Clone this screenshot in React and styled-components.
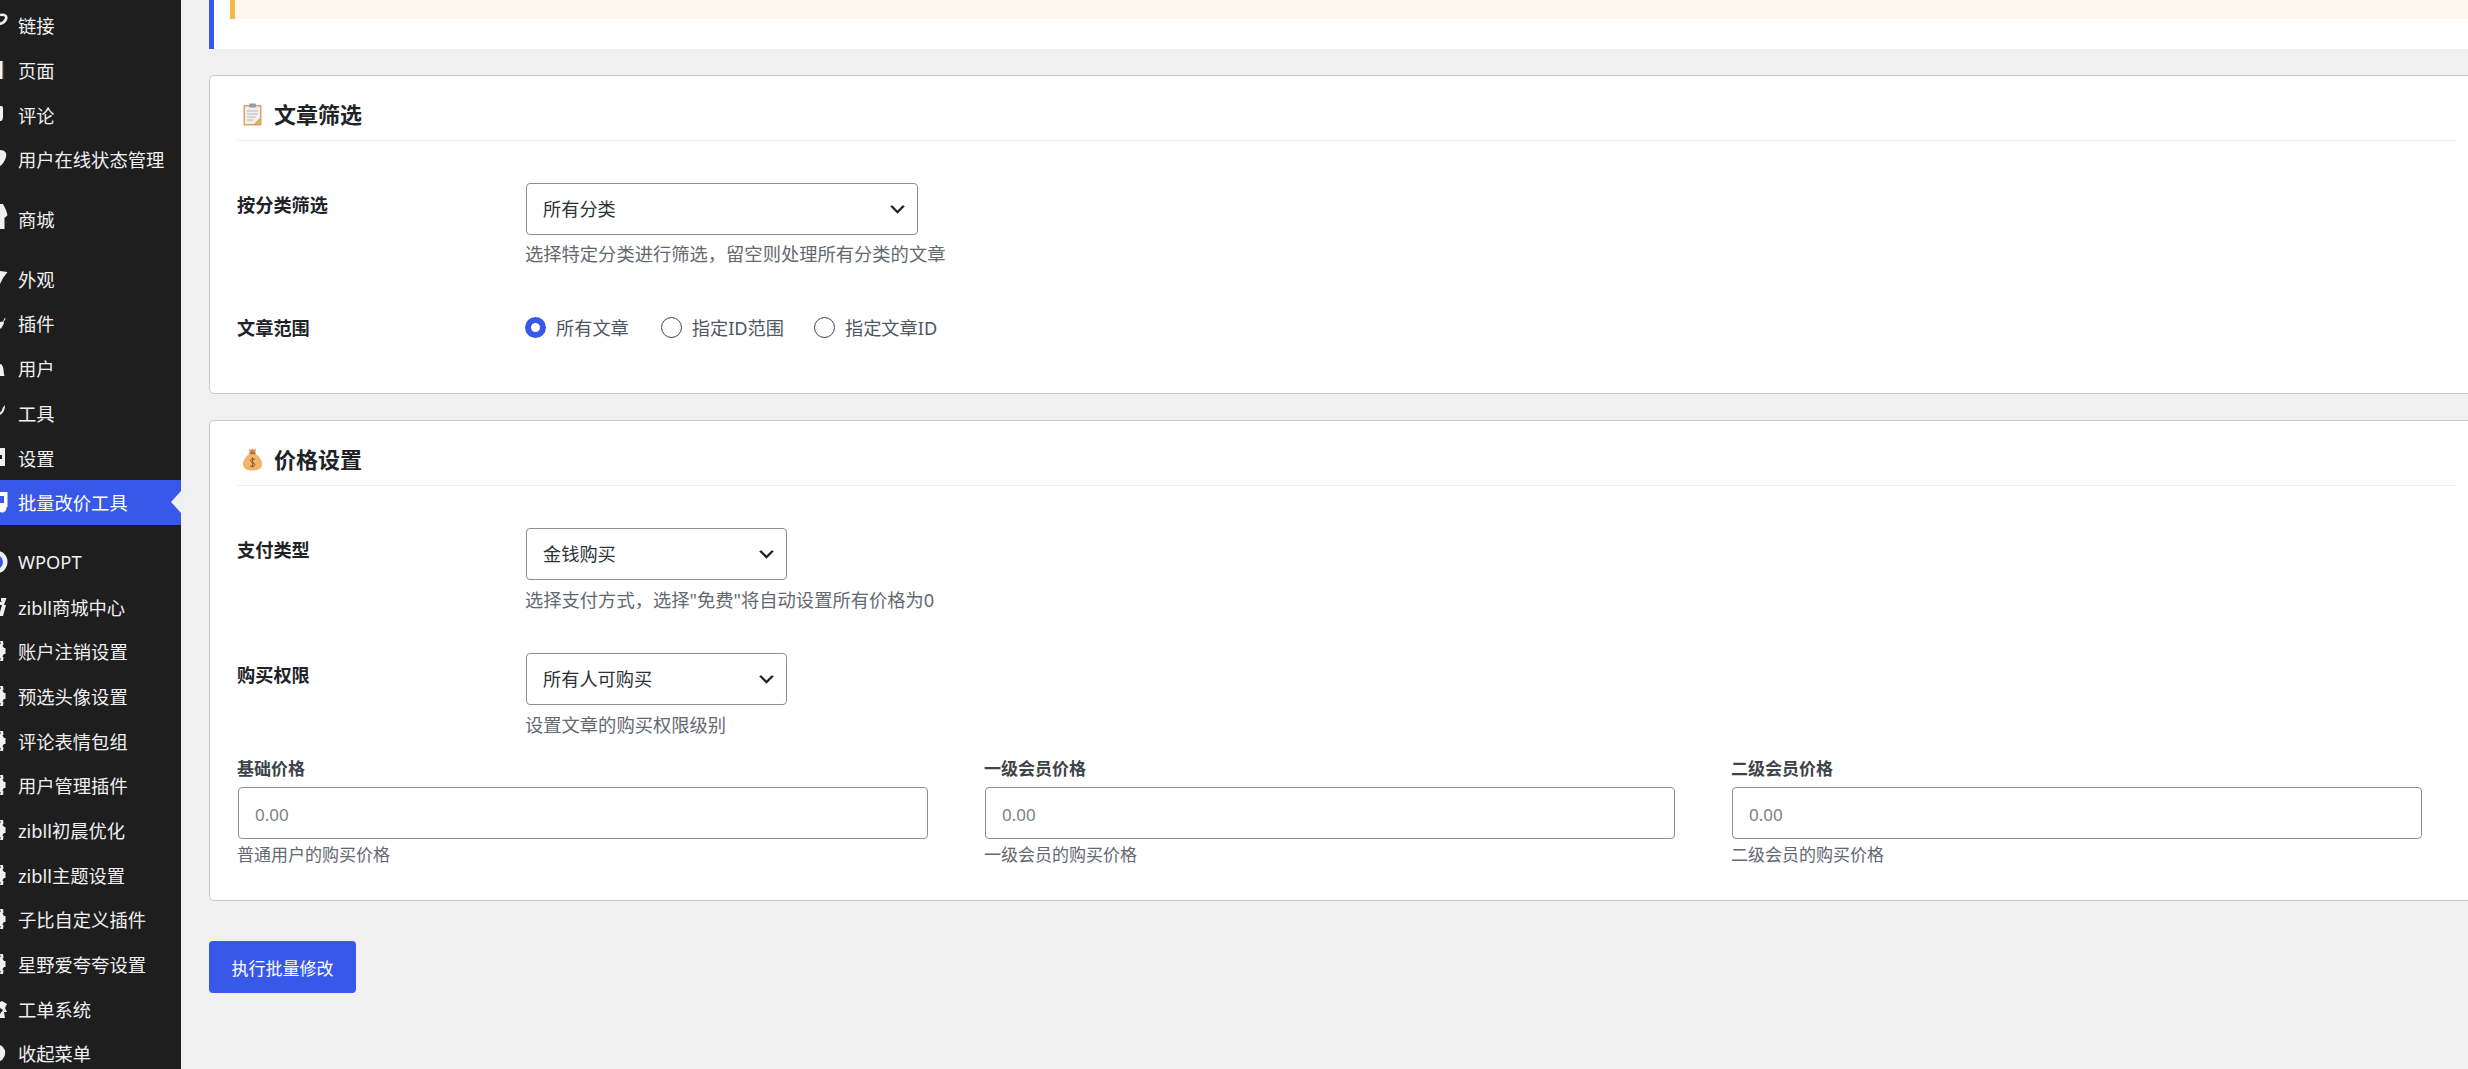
import React from 'react';
import styled, { createGlobalStyle } from 'styled-components';

const GlobalStyle = createGlobalStyle`
  html, body {
    margin: 0;
    height: 100%;
    overflow: hidden;
    background: #f0f0f1;
    font-family: "Noto Sans", "Noto Sans CJK SC", sans-serif;
  }
  * {
    box-sizing: border-box;
  }
`;

const Page = styled.div`
  display: flex;
  height: 1069px;
  overflow: hidden;
`;

const Sidebar = styled.nav`
  flex: none;
  width: 181px;
  height: 100%;
  padding-top: 3px;
  overflow: hidden;
  background: #1e1e1e;
`;

const MenuGroup = styled.div`
  margin-bottom: 15px;
`;

const MenuItem = styled.div`
  position: relative;
  display: flex;
  align-items: center;
  gap: 10px;
  height: 44.7px;
  font-size: 18.3px;
  color: ${(props) => (props.$active ? '#fff' : '#f0f0f1')};
  background: ${(props) => (props.$active ? '#3858e9' : 'transparent')};

  ${(props) =>
    props.$active &&
    `
    &::after {
      content: '';
      position: absolute;
      right: 0;
      top: 50%;
      margin-top: -11px;
      border: 11px solid transparent;
      border-left-width: 0;
      border-right: 10px solid #f0f0f1;
    }
  `}
`;

const MenuGlyph = styled.svg`
  flex: none;
  width: 8px;
  height: 30px;
`;

const Main = styled.main`
  flex: none;
  width: 2304px;
  padding-left: 28px;
`;

const Notice = styled.div`
  height: 49px;
  padding-left: 16px;
  background: #fff;
  border-left: 5px solid #3858e9;
`;

const WarnBox = styled.div`
  height: 19px;
  background: #fef7ee;
  border-left: 5px solid #f0b849;
`;

const Card = styled.section`
  margin-top: ${(props) => props.$top}px;
  padding: 0 27px ${(props) => props.$bottom}px;
  background: #fff;
  border: 1px solid #c9cace;
  border-radius: 5px;
`;

const CardTitle = styled.h2`
  display: flex;
  align-items: center;
  gap: 12px;
  height: 65px;
  margin: 0 0 42px;
  padding: 12px 0 0 6px;
  font-size: 22px;
  font-weight: 700;
  line-height: 26px;
  color: #1d2327;
  border-bottom: 1px solid #f0f0f1;
`;

const TitleIcon = styled.svg`
  flex: none;
  width: 19px;
  height: 23px;
`;

const FormRow = styled.div`
  display: grid;
  grid-template-columns: 288px 1fr;
  margin-bottom: ${(props) => props.$gap}px;
`;

const RowLabel = styled.div`
  padding-top: 9px;
  font-size: 18.2px;
  font-weight: 700;
  line-height: 26px;
  color: #1d2327;
`;

const SelectBox = styled.select`
  display: block;
  width: ${(props) => props.$width}px;
  height: 52px;
  margin-left: 1px;
  padding: 0 16px;
  font: inherit;
  font-size: 18.2px;
  color: #2c3338;
  background: #fff url("data:image/svg+xml,%3Csvg xmlns='http://www.w3.org/2000/svg' viewBox='0 0 20 20'%3E%3Cpath d='M5 6l5 5 5-5 2 1-7 7-7-7 2-1z' fill='%231d2327'/%3E%3C/svg%3E") no-repeat right 9px center / 21px 21px;
  border: 1px solid #8c8f94;
  border-radius: 4px;
  appearance: none;
`;

const HelpText = styled.p`
  margin: ${(props) => props.$top ?? 7}px 0 0;
  font-size: ${(props) => props.$size ?? 18.3}px;
  line-height: 26px;
  color: #646970;
`;

const RadioRow = styled.div`
  display: flex;
  align-items: center;
  height: 42px;
`;

const RadioLabel = styled.label`
  display: flex;
  align-items: center;
  gap: 10px;
  margin-right: ${(props) => props.$after ?? 0}px;
  font-size: 18.2px;
  color: #50575e;
`;

const Radio = styled.input`
  flex: none;
  width: 21px;
  height: 21px;
  margin: 0;
  background: #fff;
  border: 1.5px solid #3c434a;
  border-radius: 50%;
  appearance: none;

  &:checked {
    border: 6px solid #3858e9;
  }
`;

const PriceGrid = styled.div`
  display: grid;
  grid-template-columns: repeat(3, 692px);
  gap: 55px;
  margin-top: -22px;
`;

const PriceLabel = styled.label`
  display: block;
  font-size: 17px;
  font-weight: 700;
  line-height: 26px;
  color: #3c434a;
`;

const PriceInput = styled.input`
  display: block;
  width: 690px;
  height: 52px;
  margin: 5px 0 0 1px;
  padding: 2px 16px 0;
  font: inherit;
  font-size: 17px;
  color: #2c3338;
  background: #fff;
  border: 1px solid #8c8f94;
  border-radius: 4px;

  &::placeholder {
    color: #7b7f85;
    opacity: 1;
  }
`;

const SubmitButton = styled.button`
  display: block;
  width: 147px;
  height: 52px;
  margin-top: 40px;
  padding: 0;
  font: inherit;
  font-size: 17px;
  color: #fff;
  background: #3858e9;
  border: none;
  border-radius: 4px;
`;

const iconFill = '#f0f0f1';

const Gear = () => (
  <g fill={iconFill}>
    <circle cx="-4" cy="15" r="8.5" />
    <path d="M0 5h3l.5 3.5-2 2zM0 25h3l.5-3.5-2-2zM2 12h3.5v6H2z" />
  </g>
);

const glyphs = {
  link: <path d="M0 5C5 4 7 6 6 9 5 12 3 13 0 14" fill="none" stroke={iconFill} strokeWidth="2.6" />,
  page: (
    <g>
      <rect y="6" width="2.4" height="18" fill={iconFill} />
      <rect x="2.4" y="6" width="0.8" height="18" fill="#c9a35e" />
    </g>
  ),
  comment: <path d="M0 6H1.5Q3 6 3 8V17Q3 20 1 21H0Z" fill={iconFill} />,
  users: <path d="M0 6C5 6 7 9 6 13 5 17 2 21 0 22Z" fill={iconFill} />,
  store: <path d="M0 0H3L6 6 7.5 11C6 13 5 13.5 4.5 13.5V25H0Z" fill={iconFill} />,
  appearance: <path d="M0 7L7.5 8 3 14 0 20Z" fill={iconFill} />,
  plugin: <path d="M5 9.5L5.5 11 3.5 14 4 15.5 1 20.5H0V14L3 13.5Z" fill={iconFill} />,
  user: <path d="M0 11C2 11 3.5 14 3.5 17 3.5 19 4 21 4.5 23H0Z" fill={iconFill} />,
  tool: <path d="M5 7C5 12 3 15.5 0 17V14.5C1 14 2.5 12 2.5 10Z" fill={iconFill} />,
  settings: <path d="M0 5H5V23H0V16H2V12H0Z" fill={iconFill} />,
  batch: (
    <g>
      <rect y="5" width="7.5" height="15" fill="#fff" />
      <rect y="9" width="4" height="7" fill="#3858e9" />
      <circle cx="2" cy="21" r="4.5" fill="#fff" />
    </g>
  ),
  wpopt: (
    <g>
      <circle cx="-4" cy="15" r="11.5" fill={iconFill} />
      <circle cx="-4" cy="15" r="7" fill="#3858e9" />
    </g>
  ),
  zibll: <path d="M1 6H6.5L4 13H6L3 24H0V20L2 13H0V10L3 9H1Z" fill={iconFill} />,
  gear: <Gear />,
  ticket: <path d="M0 8L2 7 7 10 5 14 7 18 4 18 5 24H0V20L3 16 0 14Z" fill={iconFill} />,
  collapse: <circle cx="-3.5" cy="15" r="8.7" fill={iconFill} />,
};

const menuGroups = [
  [
    ['link', '链接'],
    ['page', '页面'],
    ['comment', '评论'],
    ['users', '用户在线状态管理'],
  ],
  [['store', '商城']],
  [
    ['appearance', '外观'],
    ['plugin', '插件'],
    ['user', '用户'],
    ['tool', '工具'],
    ['settings', '设置'],
    ['batch', '批量改价工具', true],
  ],
  [
    ['wpopt', 'WPOPT'],
    ['zibll', 'zibll商城中心'],
    ['gear', '账户注销设置'],
    ['gear', '预选头像设置'],
    ['gear', '评论表情包组'],
    ['gear', '用户管理插件'],
    ['gear', 'zibll初晨优化'],
    ['gear', 'zibll主题设置'],
    ['gear', '子比自定义插件'],
    ['gear', '星野爱夸夸设置'],
    ['ticket', '工单系统'],
    ['collapse', '收起菜单'],
  ],
];

const priceFields = [
  ['基础价格', '普通用户的购买价格'],
  ['一级会员价格', '一级会员的购买价格'],
  ['二级会员价格', '二级会员的购买价格'],
];

const ClipboardIcon = () => (
  <TitleIcon viewBox="0 0 19 23">
    <rect x="0.5" y="2" width="18" height="20.5" rx="1" fill="#e3a263" />
    <rect x="2" y="3.5" width="15" height="17.5" fill="#f1eeee" />
    <path d="M17 15V21H11Z" fill="#eaa55f" />
    <rect x="6" y="0.5" width="7" height="4" rx="1" fill="#9b9b9f" />
    <path d="M4 8H15M4 11H15M4 14H13M4 17H10" stroke="#b9b9c2" strokeWidth="1" />
  </TitleIcon>
);

const MoneyBagIcon = () => (
  <TitleIcon viewBox="0 0 19 23">
    <path d="M6.5 5.5H12.5C16 8.5 19 12 19 16 19 20.5 15.5 22.5 9.5 22.5 3.5 22.5 0 20.5 0 16 0 12 3 8.5 6.5 5.5Z" fill="#f0b46c" />
    <path d="M6 0.5L8 2 9.5 0.5 11 2 13 0.5 12 5H7Z" fill="#d98b3c" />
    <rect x="6.5" y="4.5" width="6" height="1.6" fill="#a9642a" />
    <path d="M12 11.5C11 10.5 7.5 10.5 7.5 12.6S12 14.5 12 16.6 8 18.8 7 17.6M9.6 9.5V19.5" fill="none" stroke="#8d5326" strokeWidth="1" />
  </TitleIcon>
);

const App = () => (
  <Page>
    <GlobalStyle />
    <Sidebar>
      {menuGroups.map((group, index) => (
        <MenuGroup key={index}>
          {group.map(([glyph, text, active]) => (
            <MenuItem key={text} $active={active}>
              <MenuGlyph viewBox="0 0 8 30">{glyphs[glyph]}</MenuGlyph>
              {text}
            </MenuItem>
          ))}
        </MenuGroup>
      ))}
    </Sidebar>
    <Main>
      <Notice>
        <WarnBox />
      </Notice>

      <Card $top={26} $bottom={45}>
        <CardTitle>
          <ClipboardIcon />
          文章筛选
        </CardTitle>
        <FormRow $gap={39}>
          <RowLabel>按分类筛选</RowLabel>
          <div>
            <SelectBox $width={392} defaultValue="all">
              <option value="all">所有分类</option>
            </SelectBox>
            <HelpText $top={6}>选择特定分类进行筛选，留空则处理所有分类的文章</HelpText>
          </div>
        </FormRow>
        <FormRow $gap={0}>
          <RowLabel>文章范围</RowLabel>
          <RadioRow>
            <RadioLabel $after={32}>
              <Radio type="radio" name="range" defaultChecked />
              所有文章
            </RadioLabel>
            <RadioLabel $after={30}>
              <Radio type="radio" name="range" />
              指定ID范围
            </RadioLabel>
            <RadioLabel>
              <Radio type="radio" name="range" />
              指定文章ID
            </RadioLabel>
          </RadioRow>
        </FormRow>
      </Card>

      <Card $top={26} $bottom={32}>
        <CardTitle>
          <MoneyBagIcon />
          价格设置
        </CardTitle>
        <FormRow $gap={40}>
          <RowLabel>支付类型</RowLabel>
          <div>
            <SelectBox $width={261} defaultValue="money">
              <option value="money">金钱购买</option>
            </SelectBox>
            <HelpText>选择支付方式，选择"免费"将自动设置所有价格为0</HelpText>
          </div>
        </FormRow>
        <FormRow $gap={40}>
          <RowLabel>购买权限</RowLabel>
          <div>
            <SelectBox $width={261} defaultValue="all">
              <option value="all">所有人可购买</option>
            </SelectBox>
            <HelpText>设置文章的购买权限级别</HelpText>
          </div>
        </FormRow>
        <PriceGrid>
          {priceFields.map(([label, help]) => (
            <div key={label}>
              <PriceLabel>{label}</PriceLabel>
              <PriceInput type="text" placeholder="0.00" />
              <HelpText $top={3} $size={17}>{help}</HelpText>
            </div>
          ))}
        </PriceGrid>
      </Card>

      <SubmitButton type="button">执行批量修改</SubmitButton>
    </Main>
  </Page>
);

export default App;
